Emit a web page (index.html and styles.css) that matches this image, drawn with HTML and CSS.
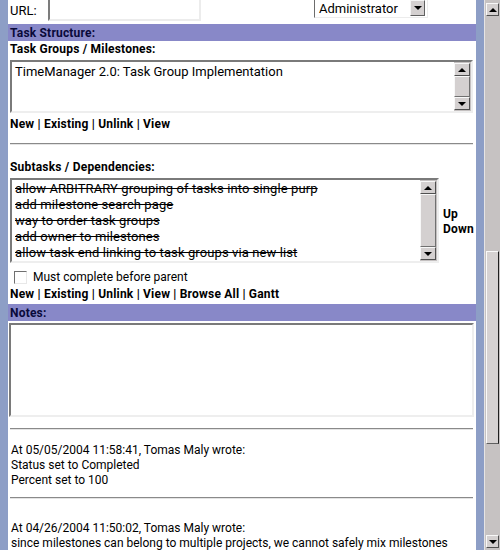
FILE: index.html
```html
<!DOCTYPE html>
<html>
<head>
<meta charset="utf-8">
<link rel="stylesheet" href="styles.css">
</head>
<body>
<div class="frame">
  <div class="edge"></div>
  <div class="content">
    <div class="urlrow">
      <span class="urllabel">URL:</span>
      <span class="input url"></span>
      <span class="select">
        <span class="seltext">Administrator</span>
        <span class="selbtn"><span class="arr down"></span></span>
      </span>
    </div>

    <div class="bar">Task Structure:</div>
    <div class="label">Task Groups / Milestones:</div>
    <div class="listbox lb1">
      <div class="items">
        <div class="item">TimeManager 2.0: Task Group Implementation</div>
      </div>
      <div class="vscroll">
        <span class="btn"><span class="arr up"></span></span>
        <span class="thumb"></span>
        <span class="btn"><span class="arr down"></span></span>
      </div>
    </div>
    <div class="links">New | Existing | Unlink | View</div>
    <div class="rule r1"></div>

    <div class="label sub">Subtasks / Dependencies:</div>
    <div class="subrow">
      <div class="listbox lb2">
        <div class="items">
          <div class="item done">allow ARBITRARY grouping of tasks into single purp</div>
          <div class="item done">add milestone search page</div>
          <div class="item done">way to order task groups</div>
          <div class="item done">add owner to milestones</div>
          <div class="item done">allow task end linking to task groups via new list</div>
        </div>
        <div class="vscroll">
          <span class="btn"><span class="arr up"></span></span>
          <span class="thumb"></span>
          <span class="btn"><span class="arr down"></span></span>
        </div>
      </div>
      <div class="updown"><div>Up</div><div>Down</div></div>
    </div>
    <div class="checkrow"><span class="check"></span><span>Must complete before parent</span></div>
    <div class="links l2">New | Existing | Unlink | View | Browse All | Gantt</div>

    <div class="bar notesbar">Notes:</div>
    <div class="notes"></div>
    <div class="rule r2"></div>

    <div class="comment c1">
      <div>At 05/05/2004 11:58:41, Tomas Maly wrote:</div>
      <div>Status set to Completed</div>
      <div>Percent set to 100</div>
    </div>
    <div class="rule r3"></div>
    <div class="comment c2">
      <div>At 04/26/2004 11:50:02, Tomas Maly wrote:</div>
      <div>since milestones can belong to multiple projects, we cannot safely mix milestones</div>
      <div>and projects together.</div>
    </div>
  </div>
  <div class="edge"></div>
  <div class="pagescroll">
    <span class="btn"><span class="arr up"></span></span>
    <span class="track top"></span>
    <span class="thumb"></span>
    <span class="track bottom"></span>
    <span class="btn"><span class="arr down"></span></span>
  </div>
</div>
</body>
</html>
```
FILE: styles.css
```css
html, body {
  margin: 0;
  padding: 0;
  background: #ffffff;
}
body {
  font-family: Roboto, "Liberation Sans", sans-serif;
  font-size: 12px;
  color: #000;
}
.frame {
  display: flex;
  width: 500px;
  height: 550px;
  overflow: hidden;
}
.edge {
  width: 8px;
  flex: none;
  background: #8d9ec6;
}
.content {
  width: 468px;
  flex: none;
  overflow: hidden;
  background: #fff;
}

/* URL row */
.urlrow {
  display: flex;
  align-items: flex-start;
  height: 24px;
  margin-top: -2px;
  padding-left: 2px;
}
.urllabel {
  width: 38px;
  padding-top: 5px;
  line-height: 16px;
  font-size: 13px;
}
.input {
  display: block;
  box-sizing: border-box;
  border-style: solid;
  border-width: 2px;
  border-color: #7c7c7c #ececec #ececec #7c7c7c;
  background: #fff;
}
.url {
  width: 153px;
  height: 23px;
}
.select {
  display: flex;
  align-items: flex-start;
  box-sizing: border-box;
  margin-left: 113px;
  width: 114px;
  height: 20px;
  border-left: 1px solid #6c6c6c;
  border-bottom: 1px solid #ececec;
  border-right: 1px solid #ececec;
  background: #fff;
}
.seltext {
  flex: 1;
  padding: 3px 0 0 4px;
  line-height: 15px;
  font-size: 13px;
}
.selbtn {
  display: flex;
  align-items: center;
  justify-content: center;
  box-sizing: border-box;
  width: 15px;
  height: 16px;
  margin: 2px 2px 0 0;
  background: #d4d0d0;
  border: 1px solid;
  border-color: #f4f4f4 #606060 #606060 #f4f4f4;
}

/* arrows */
.arr {
  width: 0;
  height: 0;
  border-left: 4px solid transparent;
  border-right: 4px solid transparent;
}
.arr.up { border-bottom: 4px solid #000; }
.arr.down { border-top: 4px solid #000; }

/* section bars */
.bar {
  margin-top: 2px;
  height: 17px;
  line-height: 18px;
  padding-left: 2px;
  background: #8888c8;
  color: #0a0a3a;
  font-weight: bold;
  font-size: 12px;
  letter-spacing: 0.2px;
}
.label, .links, .updown {
  font-weight: bold;
  letter-spacing: 0.2px;
}
.label {
  line-height: 16px;
  padding-left: 2px;
}
.label.sub {
  margin-top: 14px;
}

/* list boxes */
.listbox {
  display: flex;
  box-sizing: border-box;
  border-style: solid;
  border-width: 2px;
  border-color: #7a7a7a #eeeeee #eeeeee #7a7a7a;
  background: #fff;
}
.items {
  flex: 1;
  padding: 1px 0 0 3px;
  font-size: 13px;
  line-height: 16px;
  white-space: nowrap;
  overflow: hidden;
}
.lb1 {
  margin: 3px 0 0 2px;
  width: 463px;
  height: 53px;
}
.lb1 .items {
  padding-top: 2px;
}
.lb2 .items {
  letter-spacing: 0.1px;
}
.item.done {
  text-decoration: line-through;
}
.vscroll {
  display: flex;
  flex-direction: column;
  width: 16px;
  flex: none;
  padding: 1px 1px 1px 0;
  background: #c4c0c0;
}
.btn {
  display: flex;
  align-items: center;
  justify-content: center;
  box-sizing: border-box;
  height: 13px;
  flex: none;
  background: #d4d0d0;
  border: 1px solid;
  border-color: #f8f8f8 #505050 #505050 #f8f8f8;
}
.vscroll .thumb {
  flex: 1;
  box-sizing: border-box;
  background: #d4d0d0;
  border: 1px solid;
  border-color: #f8f8f8 #707070 #707070 #f8f8f8;
}
.links {
  margin-top: 3px;
  line-height: 16px;
  padding-left: 2px;
}
.rule {
  margin-left: 2px;
  width: 463px;
  height: 0;
  border-top: 1px solid #8a8a8a;
  border-bottom: 1px solid #e4e4e4;
}
.r1 { margin-top: 11px; }
.r2 { margin-top: 11px; }
.r3 { margin-top: 9px; }

.subrow {
  display: flex;
  align-items: center;
  margin-top: 3px;
  padding-left: 2px;
}
.lb2 {
  width: 429px;
  height: 85px;
}
.updown {
  margin-left: 4px;
  padding-top: 2px;
  line-height: 15px;
}
.checkrow {
  display: flex;
  align-items: center;
  margin-top: 6px;
  padding-left: 6px;
  line-height: 16px;
  height: 16px;
}
.check {
  box-sizing: border-box;
  width: 13px;
  height: 13px;
  margin-right: 6px;
  border-style: solid;
  border-width: 1px;
  border-color: #707070 #e8e8e8 #e8e8e8 #707070;
  background: #fff;
}
.links.l2 {
  margin-top: 1px;
}
.notesbar {
  margin-top: 2px;
}
.notes {
  box-sizing: border-box;
  margin: 2px 0 0 1px;
  width: 465px;
  height: 94px;
  border-style: solid;
  border-width: 2px;
  border-color: #7a7a7a #eeeeee #eeeeee #7a7a7a;
  background: #fff;
}
.comment {
  padding-left: 3px;
  line-height: 15px;
  white-space: nowrap;
}
.c1 { margin-top: 13px; }
.c2 { margin-top: 22px; }

/* page scrollbar */
.pagescroll {
  display: flex;
  flex-direction: column;
  width: 16px;
  flex: none;
  box-sizing: border-box;
  padding: 3px 1px 2px 1px;
  background: #c6c2c2;
  border-left: 1px solid #e6e4e4;
}
.pagescroll .btn {
  height: 13px;
}
.pagescroll .track.top {
  height: 235px;
  flex: none;
}
.pagescroll .thumb {
  height: 193px;
  flex: none;
  box-sizing: border-box;
  background: #d6d2d2;
  border: 1px solid;
  border-color: #fafafa #202020 #606060 #fafafa;
}
.pagescroll .track.bottom {
  flex: 1;
}
```
